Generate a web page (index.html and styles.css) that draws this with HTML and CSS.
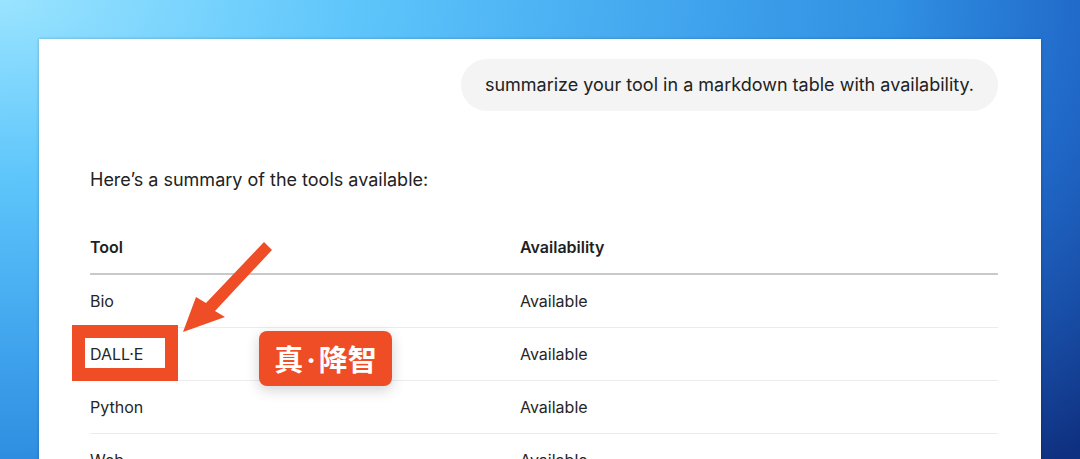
FILE: index.html
```html
<!DOCTYPE html>
<html lang="en">
<head>
    <meta charset="UTF-8">
    <meta name="viewport" content="width=device-width, initial-scale=1.0">
    <title>Tools summary</title>
    <link rel="stylesheet" href="styles.css">
</head>
<body>
    <div class="card">
        <!-- user message -->
        <div class="user-row">
            <div class="bubble">summarize your tool in a markdown table with availability.</div>
        </div>

        <!-- assistant answer -->
        <p class="summary">Here’s a summary of the tools available:</p>
        <table class="tools">
            <thead>
                <tr>
                    <th class="col-tool">Tool</th>
                    <th>Availability</th>
                </tr>
            </thead>
            <tbody>
                <tr><td>Bio</td><td>Available</td></tr>
                <tr><td>DALL·E</td><td>Available</td></tr>
                <tr><td>Python</td><td>Available</td></tr>
                <tr><td>Web</td><td>Available</td></tr>
            </tbody>
        </table>

        <!-- annotations drawn over the screenshot -->
        <div class="mark-box"></div>
        <svg class="mark-arrow" width="100" height="104" viewBox="0 0 100 104">
            <polygon points="4,98 17,63 27,69 85,8 93,16 36,77 46,83" fill="#ef4d25"/>
        </svg>
        <div class="mark-label">真<span class="dot">·</span>降智</div>
    </div>
</body>
</html>
```

FILE: styles.css
```css
html, body {
    margin: 0;
    height: 100%;
    overflow: hidden;
}
body {
    font-family: Inter, "Noto Sans", sans-serif;
    color: #1f1f1f;
    background: radial-gradient(ellipse 1400px 700px at 0 0, #9ae4ff 0%, #5fc6fb 25%, #40a3ed 50%, #3090e2 64%, #2068c8 78%, #0f3080 100%);
    padding: 39px 39px 0 39px;
    box-sizing: border-box;
}
.card {
    position: relative;
    background: #fff;
    height: 480px;
    padding: 20px 43px 0 51px;
    box-shadow: 0 0 3px rgba(0, 0, 0, 0.25);
}
.user-row {
    display: flex;
    justify-content: flex-end;
}
.bubble {
    background: #f4f4f4;
    border-radius: 26px;
    height: 52px;
    line-height: 52px;
    padding: 0 24px;
    font-size: 18px;
    color: #222;
}
.summary {
    margin: 57px 0 0 0;
    font-size: 18px;
    line-height: 24px;
    color: #222;
}
.tools {
    width: 100%;
    margin-top: 35px;
    border-collapse: collapse;
    font-size: 16px;
}
.tools th {
    text-align: left;
    font-weight: 600;
    line-height: 20px;
    padding: 10px 0 16px 0;
    border-bottom: 2px solid #c9c9c9;
}
.tools .col-tool {
    width: 430px;
}
.tools td {
    height: 52px;
    padding: 0;
    line-height: 20px;
    border-bottom: 1px solid #ececec;
    color: #262626;
}
/* red annotations */
.mark-box {
    position: absolute;
    left: 33px;
    top: 286px;
    width: 80px;
    height: 30px;
    border: 13px solid #ef4d25;
}
.mark-arrow {
    position: absolute;
    left: 140px;
    top: 195px;
}
.mark-label {
    position: absolute;
    left: 220px;
    top: 292px;
    width: 133px;
    height: 55px;
    line-height: 55px;
    text-align: center;
    background: #ef4d25;
    color: #fff;
    border-radius: 8px;
    font-family: "Noto Sans CJK SC", sans-serif;
    font-weight: 700;
    font-size: 29px;
    box-shadow: 0 4px 14px rgba(0, 0, 0, 0.18);
}
.mark-label .dot {
    font-family: Inter, sans-serif;
    margin: 0 3px;
}
```
